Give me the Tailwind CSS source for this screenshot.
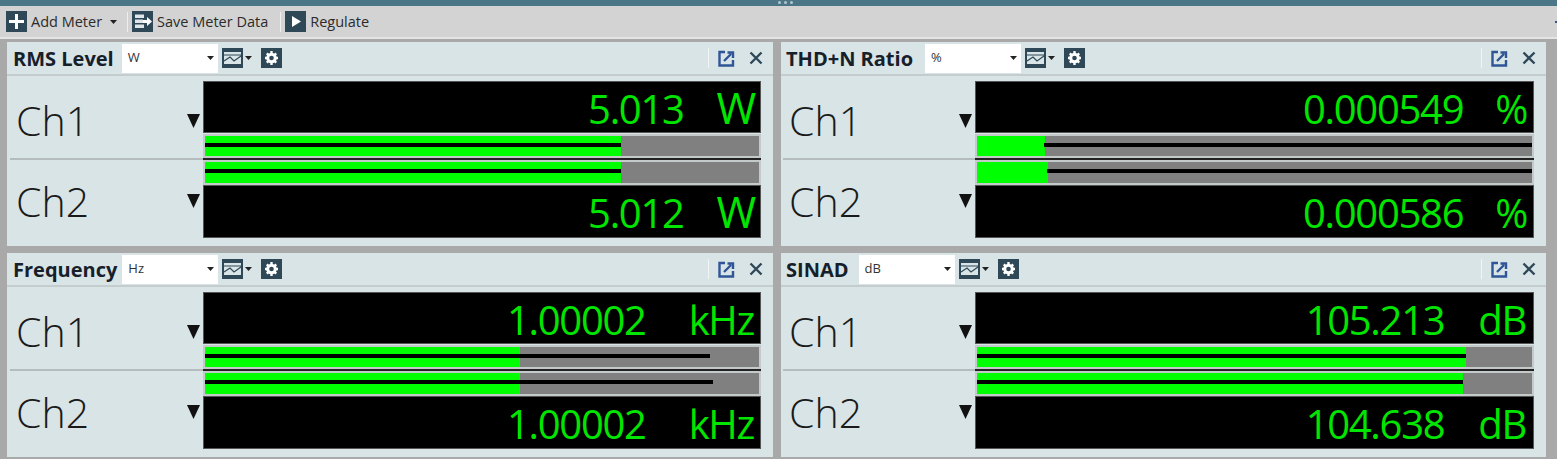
<!DOCTYPE html>
<html lang="en">
<head>
  <meta charset="UTF-8">
  <title>Meters</title>
  <script src="https://cdn.jsdelivr.net/npm/@tailwindcss/browser@4"></script>
</head>
<body class="bg-[#a9a9a9] font-['Open_Sans',sans-serif] overflow-hidden">
  <div class="w-[1557px] h-[459px] flex flex-col">
    <!-- grip bar -->
    <div class="h-[6px] bg-[#4a7687] flex justify-center items-start gap-[3px] pt-[1px] pl-[13px]">
      <span class="w-[3px] h-[3px] rounded-full bg-[#b4c6ce]"></span>
      <span class="w-[3px] h-[3px] rounded-full bg-[#b4c6ce]"></span>
      <span class="w-[3px] h-[3px] rounded-full bg-[#b4c6ce]"></span>
    </div>

    <!-- toolbar -->
    <div class="h-[33px] bg-[#d3d3d3] border-b-2 border-[#e4e4e4] flex items-center pl-[6px] text-[14.5px] text-[#2b2b2b]">
      <svg class="w-[21px] h-[21px]" viewBox="0 0 21 21"><rect width="21" height="21" fill="#2f4858"/><path d="M10.5 3v15M3 10.5h15" stroke="#fff" stroke-width="3"/></svg>
      <span class="ml-[4px]">Add Meter</span>
      <svg class="w-[7px] h-[4px] ml-[8px]" viewBox="0 0 7 4"><path d="M0 0h7L3.500 4z" fill="#222"/></svg>
      <span class="w-[1px] h-[20px] bg-[#efefef] ml-[10px] mr-[4px]"></span>
      <svg class="w-[21px] h-[21px]" viewBox="0 0 21 21"><rect width="21" height="21" fill="#2f4858"/><path d="M3 3.500h9v3.500H3zM3 8.500h8v3.500H3zM3 13.500h9V17H3z" fill="#dfe6e9"/><path d="M11 9h4V6l5 4.500-5 4.500v-3h-4z" fill="#fff"/></svg>
      <span class="ml-[4px]">Save Meter Data</span>
      <span class="w-[1px] h-[20px] bg-[#efefef] ml-[12px] mr-[4px]"></span>
      <svg class="w-[21px] h-[21px]" viewBox="0 0 21 21"><rect width="21" height="21" fill="#2f4858"/><path d="M7 5l9 5.500-9 5.500z" fill="#fff"/></svg>
      <span class="ml-[4px]">Regulate</span>
      <span class="ml-auto w-[2px] h-[2px] bg-[#2f5597]"></span>
    </div>

    <!-- meter panels -->
    <div class="grid grid-cols-[766px_765px] grid-rows-[204px_204px] gap-x-[8px] gap-y-[7px] pl-[7px] pt-[3px]">

      <!-- RMS Level -->
      <section class="bg-[#d9e4e6] flex flex-col">
        <header class="h-[34px] border-b-2 border-[#c4cccd] flex items-center pl-[6px] pr-[10px] shrink-0">
          <h2 class="text-[20px] font-bold text-[#16202a] pt-[1px]">RMS Level</h2>
          <div class="w-[96px] h-[29px] bg-white ml-[8px] flex items-center justify-between pl-[6px] pr-[4px] text-[13px] text-[#333]">W<svg class="w-[7px] h-[4px]" viewBox="0 0 7 4"><path d="M0 0h7L3.500 4z" fill="#222"/></svg></div>
          <svg class="w-[21px] h-[20px] ml-[4px]" viewBox="0 0 21 20"><rect width="21" height="20" fill="#2f4858"/><rect x="2" y="4" width="17" height="12" fill="#d9e4e6"/><path d="M2 7h17M2 13l6-4 4 4 7-5" fill="none" stroke="#2f4858" stroke-width="1.200"/></svg>
          <svg class="w-[7px] h-[4px] ml-[2px]" viewBox="0 0 7 4"><path d="M0 0h7L3.500 4z" fill="#222"/></svg>
          <svg class="w-[21px] h-[20px] ml-[9px]" viewBox="0 0 21 20"><rect width="21" height="20" fill="#2f4858"/><circle cx="10.500" cy="10" r="3.800" fill="none" stroke="#fff" stroke-width="3"/><path d="M10.500 3v3M10.500 14v3M4 10h3M14 10h3M5.800 5.300l2 2M13.200 12.700l2 2M15.200 5.300l-2 2M7.800 12.700l-2 2" stroke="#fff" stroke-width="2.400"/></svg>
          <span class="ml-auto w-[1px] h-[20px] bg-[#f2f5f5]"></span>
          <svg class="w-[17px] h-[17px] ml-[9px]" viewBox="0 0 17 17"><path d="M7 2H1.500v13.500H15V10" fill="none" stroke="#2f5597" stroke-width="2.400"/><path d="M6 11l7-7M9.500 2.500h5.500V8" fill="none" stroke="#2f5597" stroke-width="2.400"/></svg>
          <svg class="w-[14px] h-[14px] ml-[14px]" viewBox="0 0 14 14"><path d="M1.500 1.500l11 11M12.500 1.500l-11 11" stroke="#2f4858" stroke-width="2.400"/></svg>
        </header>
        <div class="flex h-[84px]">
          <div class="w-[193px] ml-[3px] shrink-0 border-b-2 border-[#b5bcbd] flex items-center justify-between pl-[6px] pr-[3px] pt-[8px]">
            <span class="text-[41px] font-light text-[#1a1a1a]">Ch1</span>
            <svg class="w-[13px] h-[14px]" viewBox="0 0 13 14"><path d="M0 0h13L6.500 14z" fill="#111"/></svg>
          </div>
          <div class="w-[558px] pt-[5px] flex flex-col border-b-2 border-[#222]">
            <div class="h-[52px] bg-black border border-[#555] flex justify-end items-center gap-[33px] pt-[3px] pr-[5px] text-[40px] tracking-[-1.3px] text-[#00e600]"><span>5.013</span><span class="text-[43px]">W</span></div>
            <div class="relative h-[25px] mt-[1px] bg-[#808080] border-2 border-[#c4c9c9]">
              <div class="absolute inset-y-0 left-0 bg-[#00ff00]" style="width:416px"></div>
              <div class="absolute top-[7px] h-[4px] bg-black" style="left:0;width:416px"></div>
            </div>
          </div>
        </div>
        <div class="flex">
          <div class="w-[196px] shrink-0 flex items-center justify-between pl-[9px] pr-[3px] pt-[4px] h-[80px]">
            <span class="text-[41px] font-light text-[#1a1a1a]">Ch2</span>
            <svg class="w-[13px] h-[14px] mt-[-2px]" viewBox="0 0 13 14"><path d="M0 0h13L6.500 14z" fill="#111"/></svg>
          </div>
          <div class="w-[558px] flex flex-col">
            <div class="relative h-[25px] bg-[#808080] border-2 border-[#c4c9c9]">
              <div class="absolute inset-y-0 left-0 bg-[#00ff00]" style="width:416px"></div>
              <div class="absolute top-[7px] h-[4px] bg-black" style="left:0;width:416px"></div>
            </div>
            <div class="h-[53px] bg-black border border-[#555] flex justify-end items-center gap-[33px] pt-[2px] pr-[5px] text-[40px] tracking-[-1.3px] text-[#00e600]"><span>5.012</span><span class="text-[43px]">W</span></div>
          </div>
        </div>
      </section>

      <!-- THD+N Ratio -->
      <section class="bg-[#d9e4e6] flex flex-col">
        <header class="h-[34px] border-b-2 border-[#c4cccd] flex items-center pl-[5px] pr-[10px] shrink-0">
          <h2 class="text-[20px] font-bold text-[#16202a] pt-[1px]">THD+N Ratio</h2>
          <div class="w-[96px] h-[29px] bg-white ml-[12px] flex items-center justify-between pl-[6px] pr-[4px] text-[13px] text-[#333]">%<svg class="w-[7px] h-[4px]" viewBox="0 0 7 4"><path d="M0 0h7L3.500 4z" fill="#222"/></svg></div>
          <svg class="w-[21px] h-[20px] ml-[4px]" viewBox="0 0 21 20"><rect width="21" height="20" fill="#2f4858"/><rect x="2" y="4" width="17" height="12" fill="#d9e4e6"/><path d="M2 7h17M2 13l6-4 4 4 7-5" fill="none" stroke="#2f4858" stroke-width="1.200"/></svg>
          <svg class="w-[7px] h-[4px] ml-[2px]" viewBox="0 0 7 4"><path d="M0 0h7L3.500 4z" fill="#222"/></svg>
          <svg class="w-[21px] h-[20px] ml-[9px]" viewBox="0 0 21 20"><rect width="21" height="20" fill="#2f4858"/><circle cx="10.500" cy="10" r="3.800" fill="none" stroke="#fff" stroke-width="3"/><path d="M10.500 3v3M10.500 14v3M4 10h3M14 10h3M5.800 5.300l2 2M13.200 12.700l2 2M15.200 5.300l-2 2M7.800 12.700l-2 2" stroke="#fff" stroke-width="2.400"/></svg>
          <span class="ml-auto w-[1px] h-[20px] bg-[#f2f5f5]"></span>
          <svg class="w-[17px] h-[17px] ml-[9px]" viewBox="0 0 17 17"><path d="M7 2H1.500v13.500H15V10" fill="none" stroke="#2f5597" stroke-width="2.400"/><path d="M6 11l7-7M9.500 2.500h5.500V8" fill="none" stroke="#2f5597" stroke-width="2.400"/></svg>
          <svg class="w-[14px] h-[14px] ml-[14px]" viewBox="0 0 14 14"><path d="M1.500 1.500l11 11M12.500 1.500l-11 11" stroke="#2f4858" stroke-width="2.400"/></svg>
        </header>
        <div class="flex h-[84px]">
          <div class="w-[192px] ml-[2px] shrink-0 border-b-2 border-[#b5bcbd] flex items-center justify-between pl-[6px] pr-[3px] pt-[8px]">
            <span class="text-[41px] font-light text-[#1a1a1a]">Ch1</span>
            <svg class="w-[13px] h-[14px]" viewBox="0 0 13 14"><path d="M0 0h13L6.500 14z" fill="#111"/></svg>
          </div>
          <div class="w-[559px] pt-[5px] flex flex-col border-b-2 border-[#222]">
            <div class="h-[52px] bg-black border border-[#555] flex justify-end items-center gap-[32px] pt-[3px] pr-[6px] text-[40px] tracking-[-1.3px] text-[#00e600]"><span>0.000549</span><span>%</span></div>
            <div class="relative h-[25px] mt-[1px] bg-[#808080] border-2 border-[#c4c9c9]">
              <div class="absolute inset-y-0 left-0 bg-[#00ff00]" style="width:68px"></div>
              <div class="absolute top-[7px] h-[4px] bg-black" style="left:67px;width:488px"></div>
            </div>
          </div>
        </div>
        <div class="flex">
          <div class="w-[194px] shrink-0 flex items-center justify-between pl-[8px] pr-[3px] pt-[4px] h-[80px]">
            <span class="text-[41px] font-light text-[#1a1a1a]">Ch2</span>
            <svg class="w-[13px] h-[14px] mt-[-2px]" viewBox="0 0 13 14"><path d="M0 0h13L6.500 14z" fill="#111"/></svg>
          </div>
          <div class="w-[559px] flex flex-col">
            <div class="relative h-[25px] bg-[#808080] border-2 border-[#c4c9c9]">
              <div class="absolute inset-y-0 left-0 bg-[#00ff00]" style="width:71px"></div>
              <div class="absolute top-[7px] h-[4px] bg-black" style="left:70px;width:485px"></div>
            </div>
            <div class="h-[53px] bg-black border border-[#555] flex justify-end items-center gap-[32px] pt-[2px] pr-[6px] text-[40px] tracking-[-1.3px] text-[#00e600]"><span>0.000586</span><span>%</span></div>
          </div>
        </div>
      </section>

      <!-- Frequency -->
      <section class="bg-[#d9e4e6] flex flex-col">
        <header class="h-[34px] border-b-2 border-[#c4cccd] flex items-center pl-[6px] pr-[10px] shrink-0">
          <h2 class="text-[20px] font-bold text-[#16202a] pt-[1px]">Frequency</h2>
          <div class="w-[96px] h-[29px] bg-white ml-[5px] flex items-center justify-between pl-[6px] pr-[4px] text-[13px] text-[#333]">Hz<svg class="w-[7px] h-[4px]" viewBox="0 0 7 4"><path d="M0 0h7L3.500 4z" fill="#222"/></svg></div>
          <svg class="w-[21px] h-[20px] ml-[4px]" viewBox="0 0 21 20"><rect width="21" height="20" fill="#2f4858"/><rect x="2" y="4" width="17" height="12" fill="#d9e4e6"/><path d="M2 7h17M2 13l6-4 4 4 7-5" fill="none" stroke="#2f4858" stroke-width="1.200"/></svg>
          <svg class="w-[7px] h-[4px] ml-[2px]" viewBox="0 0 7 4"><path d="M0 0h7L3.500 4z" fill="#222"/></svg>
          <svg class="w-[21px] h-[20px] ml-[9px]" viewBox="0 0 21 20"><rect width="21" height="20" fill="#2f4858"/><circle cx="10.500" cy="10" r="3.800" fill="none" stroke="#fff" stroke-width="3"/><path d="M10.500 3v3M10.500 14v3M4 10h3M14 10h3M5.800 5.300l2 2M13.200 12.700l2 2M15.200 5.300l-2 2M7.800 12.700l-2 2" stroke="#fff" stroke-width="2.400"/></svg>
          <span class="ml-auto w-[1px] h-[20px] bg-[#f2f5f5]"></span>
          <svg class="w-[17px] h-[17px] ml-[9px]" viewBox="0 0 17 17"><path d="M7 2H1.500v13.500H15V10" fill="none" stroke="#2f5597" stroke-width="2.400"/><path d="M6 11l7-7M9.500 2.500h5.500V8" fill="none" stroke="#2f5597" stroke-width="2.400"/></svg>
          <svg class="w-[14px] h-[14px] ml-[14px]" viewBox="0 0 14 14"><path d="M1.500 1.500l11 11M12.500 1.500l-11 11" stroke="#2f4858" stroke-width="2.400"/></svg>
        </header>
        <div class="flex h-[84px]">
          <div class="w-[193px] ml-[3px] shrink-0 border-b-2 border-[#b5bcbd] flex items-center justify-between pl-[6px] pr-[3px] pt-[8px]">
            <span class="text-[41px] font-light text-[#1a1a1a]">Ch1</span>
            <svg class="w-[13px] h-[14px]" viewBox="0 0 13 14"><path d="M0 0h13L6.500 14z" fill="#111"/></svg>
          </div>
          <div class="w-[558px] pt-[5px] flex flex-col border-b-2 border-[#222]">
            <div class="h-[52px] bg-black border border-[#555] flex justify-end items-center gap-[43px] pt-[3px] pr-[6px] text-[40px] tracking-[-1.3px] text-[#00e600]"><span>1.00002</span><span>kHz</span></div>
            <div class="relative h-[25px] mt-[1px] bg-[#808080] border-2 border-[#c4c9c9]">
              <div class="absolute inset-y-0 left-0 bg-[#00ff00]" style="width:315px"></div>
              <div class="absolute top-[7px] h-[4px] bg-black" style="left:0;width:505px"></div>
            </div>
          </div>
        </div>
        <div class="flex">
          <div class="w-[196px] shrink-0 flex items-center justify-between pl-[9px] pr-[3px] pt-[4px] h-[80px]">
            <span class="text-[41px] font-light text-[#1a1a1a]">Ch2</span>
            <svg class="w-[13px] h-[14px] mt-[-2px]" viewBox="0 0 13 14"><path d="M0 0h13L6.500 14z" fill="#111"/></svg>
          </div>
          <div class="w-[558px] flex flex-col">
            <div class="relative h-[25px] bg-[#808080] border-2 border-[#c4c9c9]">
              <div class="absolute inset-y-0 left-0 bg-[#00ff00]" style="width:315px"></div>
              <div class="absolute top-[7px] h-[4px] bg-black" style="left:0;width:508px"></div>
            </div>
            <div class="h-[53px] bg-black border border-[#555] flex justify-end items-center gap-[43px] pt-[2px] pr-[6px] text-[40px] tracking-[-1.3px] text-[#00e600]"><span>1.00002</span><span>kHz</span></div>
          </div>
        </div>
      </section>

      <!-- SINAD -->
      <section class="bg-[#d9e4e6] flex flex-col">
        <header class="h-[34px] border-b-2 border-[#c4cccd] flex items-center pl-[5px] pr-[10px] shrink-0">
          <h2 class="text-[20px] font-bold text-[#16202a] pt-[1px]">SINAD</h2>
          <div class="w-[96px] h-[29px] bg-white ml-[10px] flex items-center justify-between pl-[6px] pr-[4px] text-[13px] text-[#333]">dB<svg class="w-[7px] h-[4px]" viewBox="0 0 7 4"><path d="M0 0h7L3.500 4z" fill="#222"/></svg></div>
          <svg class="w-[21px] h-[20px] ml-[4px]" viewBox="0 0 21 20"><rect width="21" height="20" fill="#2f4858"/><rect x="2" y="4" width="17" height="12" fill="#d9e4e6"/><path d="M2 7h17M2 13l6-4 4 4 7-5" fill="none" stroke="#2f4858" stroke-width="1.200"/></svg>
          <svg class="w-[7px] h-[4px] ml-[2px]" viewBox="0 0 7 4"><path d="M0 0h7L3.500 4z" fill="#222"/></svg>
          <svg class="w-[21px] h-[20px] ml-[9px]" viewBox="0 0 21 20"><rect width="21" height="20" fill="#2f4858"/><circle cx="10.500" cy="10" r="3.800" fill="none" stroke="#fff" stroke-width="3"/><path d="M10.500 3v3M10.500 14v3M4 10h3M14 10h3M5.800 5.300l2 2M13.200 12.700l2 2M15.200 5.300l-2 2M7.800 12.700l-2 2" stroke="#fff" stroke-width="2.400"/></svg>
          <span class="ml-auto w-[1px] h-[20px] bg-[#f2f5f5]"></span>
          <svg class="w-[17px] h-[17px] ml-[9px]" viewBox="0 0 17 17"><path d="M7 2H1.500v13.500H15V10" fill="none" stroke="#2f5597" stroke-width="2.400"/><path d="M6 11l7-7M9.500 2.500h5.500V8" fill="none" stroke="#2f5597" stroke-width="2.400"/></svg>
          <svg class="w-[14px] h-[14px] ml-[14px]" viewBox="0 0 14 14"><path d="M1.500 1.500l11 11M12.500 1.500l-11 11" stroke="#2f4858" stroke-width="2.400"/></svg>
        </header>
        <div class="flex h-[84px]">
          <div class="w-[192px] ml-[2px] shrink-0 border-b-2 border-[#b5bcbd] flex items-center justify-between pl-[6px] pr-[3px] pt-[8px]">
            <span class="text-[41px] font-light text-[#1a1a1a]">Ch1</span>
            <svg class="w-[13px] h-[14px]" viewBox="0 0 13 14"><path d="M0 0h13L6.500 14z" fill="#111"/></svg>
          </div>
          <div class="w-[559px] pt-[5px] flex flex-col border-b-2 border-[#222]">
            <div class="h-[52px] bg-black border border-[#555] flex justify-end items-center gap-[34px] pt-[3px] pr-[7px] text-[40px] tracking-[-1.3px] text-[#00e600]"><span>105.213</span><span>dB</span></div>
            <div class="relative h-[25px] mt-[1px] bg-[#808080] border-2 border-[#c4c9c9]">
              <div class="absolute inset-y-0 left-0 bg-[#00ff00]" style="width:489px"></div>
              <div class="absolute top-[7px] h-[4px] bg-black" style="left:0;width:489px"></div>
            </div>
          </div>
        </div>
        <div class="flex">
          <div class="w-[194px] shrink-0 flex items-center justify-between pl-[8px] pr-[3px] pt-[4px] h-[80px]">
            <span class="text-[41px] font-light text-[#1a1a1a]">Ch2</span>
            <svg class="w-[13px] h-[14px] mt-[-2px]" viewBox="0 0 13 14"><path d="M0 0h13L6.500 14z" fill="#111"/></svg>
          </div>
          <div class="w-[559px] flex flex-col">
            <div class="relative h-[25px] bg-[#808080] border-2 border-[#c4c9c9]">
              <div class="absolute inset-y-0 left-0 bg-[#00ff00]" style="width:486px"></div>
              <div class="absolute top-[7px] h-[4px] bg-black" style="left:0;width:486px"></div>
            </div>
            <div class="h-[53px] bg-black border border-[#555] flex justify-end items-center gap-[34px] pt-[2px] pr-[7px] text-[40px] tracking-[-1.3px] text-[#00e600]"><span>104.638</span><span>dB</span></div>
          </div>
        </div>
      </section>

    </div>
  </div>
</body>
</html>
